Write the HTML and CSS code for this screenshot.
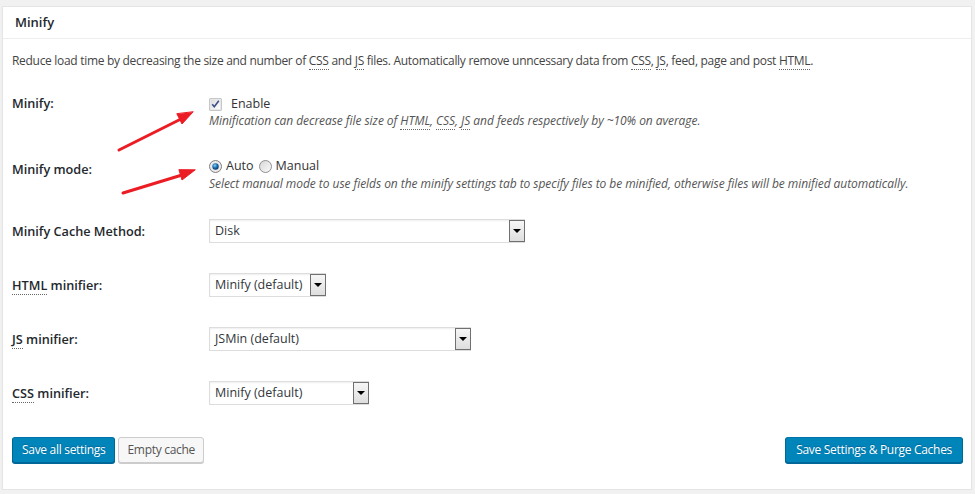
FILE: index.html
```html
<!DOCTYPE html>
<html lang="en">
<head>
    <meta charset="UTF-8">
    <title>Minify</title>
    <link rel="stylesheet" href="styles.css">
</head>
<body>
    <div class="postbox">
        <h3 class="hndle">Minify</h3>
        <div class="inside">
            <p class="intro">Reduce load time by decreasing the size and number of <abbr title="Cascading Style Sheet">CSS</abbr> and <abbr title="JavaScript">JS</abbr> files. Automatically remove unncessary data from <abbr title="Cascading Style Sheet">CSS</abbr>, <abbr title="JavaScript">JS</abbr>, feed, page and post <abbr title="Hypertext Markup Language">HTML</abbr>.</p>

            <div class="form-table">
                <div class="row row-enable">
                    <div class="th">Minify:</div>
                    <div class="td">
                        <label class="check">
                            <svg class="box" width="13" height="13" viewBox="0 0 13 13">
                                <defs>
                                    <linearGradient id="cb" x1="0" y1="0" x2="1" y2="1">
                                        <stop offset="0" stop-color="#dcdcdc"/>
                                        <stop offset="1" stop-color="#ffffff"/>
                                    </linearGradient>
                                </defs>
                                <rect x="0.5" y="0.5" width="12" height="12" fill="#8e8f8f"/>
                                <rect x="1.5" y="1.5" width="10" height="10" fill="#f4f4f4" stroke="#e8e8e8"/>
                                <rect x="2" y="2" width="9" height="9" fill="url(#cb)"/>
                                <path d="M3.2 6.2 L5.3 8.8 L9.8 2.8" fill="none" stroke="#3c4f8a" stroke-width="1.6"/>
                            </svg>
                            <span>Enable</span>
                        </label>
                        <p class="desc">Minification can decrease file size of <abbr title="Hypertext Markup Language">HTML</abbr>, <abbr title="Cascading Style Sheet">CSS</abbr>, <abbr title="JavaScript">JS</abbr> and feeds respectively by ~10% on average.</p>
                    </div>
                </div>

                <div class="row row-mode">
                    <div class="th">Minify mode:</div>
                    <div class="td">
                        <div class="radios">
                            <label class="radio">
                                <svg width="13" height="13" viewBox="0 0 13 13">
                                    <defs>
                                        <radialGradient id="rdot" cx="0.4" cy="0.35" r="0.7">
                                            <stop offset="0" stop-color="#8fd3f5"/>
                                            <stop offset="0.5" stop-color="#1b6fb3"/>
                                            <stop offset="1" stop-color="#0b2e5c"/>
                                        </radialGradient>
                                    </defs>
                                    <circle cx="6.5" cy="6.5" r="6" fill="#eaeaea" stroke="#7f7f7f"/>
                                    <circle cx="6.5" cy="6.5" r="3.2" fill="url(#rdot)"/>
                                </svg>
                                <span>Auto</span>
                            </label>
                            <label class="radio">
                                <svg width="13" height="13" viewBox="0 0 13 13">
                                    <defs>
                                        <linearGradient id="roff" x1="0" y1="0" x2="1" y2="1">
                                            <stop offset="0" stop-color="#d6d6d6"/>
                                            <stop offset="1" stop-color="#fbfbfb"/>
                                        </linearGradient>
                                    </defs>
                                    <circle cx="6.5" cy="6.5" r="6" fill="url(#roff)" stroke="#8e8e8e"/>
                                </svg>
                                <span>Manual</span>
                            </label>
                        </div>
                        <p class="desc">Select manual mode to use fields on the minify settings tab to specify files to be minified, otherwise files will be minified automatically.</p>
                    </div>
                </div>

                <div class="row row-select">
                    <div class="th">Minify Cache Method:</div>
                    <div class="td">
                        <div class="select select-cache"><span class="value">Disk</span><span class="arrow"></span></div>
                    </div>
                </div>

                <div class="row row-select">
                    <div class="th"><abbr title="Hypertext Markup Language">HTML</abbr> minifier:</div>
                    <div class="td">
                        <div class="select select-html"><span class="value">Minify (default)</span><span class="arrow"></span></div>
                    </div>
                </div>

                <div class="row row-select">
                    <div class="th"><abbr title="JavaScript">JS</abbr> minifier:</div>
                    <div class="td">
                        <div class="select select-js"><span class="value">JSMin (default)</span><span class="arrow"></span></div>
                    </div>
                </div>

                <div class="row row-select">
                    <div class="th"><abbr title="Cascading Style Sheet">CSS</abbr> minifier:</div>
                    <div class="td">
                        <div class="select select-css"><span class="value">Minify (default)</span><span class="arrow"></span></div>
                    </div>
                </div>
            </div>

            <div class="submit">
                <div class="left">
                    <button class="button button-primary">Save all settings</button>
                    <button class="button">Empty cache</button>
                </div>
                <button class="button button-primary button-purge">Save Settings &amp; Purge Caches</button>
            </div>
        </div>

        <!-- annotation arrows -->
        <svg class="arrows" width="975" height="494" viewBox="0 0 975 494">
            <g fill="#ec1c24" stroke="#ec1c24" stroke-linecap="round">
                <path d="M119 150 L181 119" stroke-width="3" fill="none"/>
                <polygon points="193,112 182,124 177,114" stroke-width="1"/>
                <path d="M123 193 L182 175" stroke-width="3" fill="none"/>
                <polygon points="195,170 182,180 179,170" stroke-width="1"/>
            </g>
        </svg>
    </div>
</body>
</html>
```

FILE: styles.css
```css
body {
    margin: 0;
    background: #f1f1f1;
    font-family: "Open Sans", sans-serif;
    font-size: 12px;
    color: #444;
}
abbr {
    text-decoration: none;
    border-bottom: 1px dotted #666;
}
.postbox {
    position: relative;
    margin: 6px 3px 0 2px;
    height: 484px;
    box-sizing: border-box;
    background: #fff;
    border: 1px solid #e5e5e5;
    box-shadow: 0 1px 1px rgba(0, 0, 0, 0.04);
}
.hndle {
    margin: 0;
    padding: 0 12px;
    height: 31px;
    line-height: 31px;
    font-size: 13px;
    font-weight: 600;
    color: #23282d;
    border-bottom: 1px solid #eee;
}
.inside {
    padding: 0 8px 0 9px;
}
.intro {
    margin: 13px 0 10px 0;
    line-height: 18px;
    letter-spacing: -0.3px;
}
.row {
    display: grid;
    grid-template-columns: 197px 1fr;
}
.th {
    font-size: 12.7px;
    font-weight: 600;
    color: #23282d;
    line-height: 17px;
}
.td {
    line-height: 18px;
}
.row-enable {
    height: 63px;
}
.row-enable .th {
    padding-top: 15px;
}
.row-enable .td {
    padding-top: 15px;
}
.row-mode {
    height: 61px;
}
.row-mode .th {
    padding-top: 18px;
}
.row-mode .td {
    padding-top: 14px;
}
.row-select {
    height: 54px;
}
.row-select .th {
    padding-top: 19px;
}
.row-select .td {
    padding-top: 15px;
}
.check, .radio {
    display: inline-flex;
    align-items: center;
    font-size: 12.5px;
    color: #333;
}
.check {
    display: flex;
    height: 16px;
    margin-top: 1px;
}
.check svg {
    margin-right: 9px;
}
.radios {
    display: flex;
    gap: 5px;
}
.radio svg {
    margin-right: 4px;
}
.desc {
    margin: 0;
    font-style: italic;
    color: #555;
    letter-spacing: -0.05px;
}
.select {
    display: flex;
    align-items: center;
    height: 24px;
    box-sizing: border-box;
    border: 1px solid #ddd;
    box-shadow: inset 0 1px 2px rgba(0, 0, 0, 0.07);
    background: #fff;
    color: #32373c;
    font-size: 12.5px;
}
.select .value {
    flex: 1;
    padding-left: 5px;
}
.select .arrow {
    width: 16px;
    height: 22px;
    box-sizing: border-box;
    margin-right: -1px;
    border: 1px solid #707070;
    background: linear-gradient(#f6f6f6, #dedede);
    display: flex;
    align-items: center;
    justify-content: center;
}
.select .arrow::after {
    content: "";
    border-left: 4px solid transparent;
    border-right: 4px solid transparent;
    border-top: 4px solid #000;
}
.select-cache {
    width: 316px;
}
.select-html {
    width: 117px;
}
.select-js {
    width: 262px;
}
.select-css {
    width: 160px;
}
.submit {
    display: flex;
    justify-content: space-between;
    margin-top: 17px;
}
.submit .left {
    display: flex;
    gap: 3px;
}
.button {
    height: 26px;
    padding: 0 9px 1px;
    font-family: inherit;
    font-size: 12px;
    letter-spacing: -0.3px;
    line-height: 24px;
    border-radius: 3px;
    border: 1px solid #ccc;
    background: #f7f7f7;
    color: #555;
    box-shadow: 0 1px 0 #ccc;
    cursor: pointer;
}
.button + .button {
    padding: 0 8px 1px;
}
.button-primary {
    background: #0085ba;
    border-color: #0073aa #006799 #006799;
    color: #fff;
    box-shadow: 0 1px 0 #006799;
    text-shadow: 0 -1px 1px #006799;
}
.button-purge {
    padding: 0 10px 1px;
}
.arrows {
    position: absolute;
    left: -3px;
    top: -7px;
    pointer-events: none;
}
```
